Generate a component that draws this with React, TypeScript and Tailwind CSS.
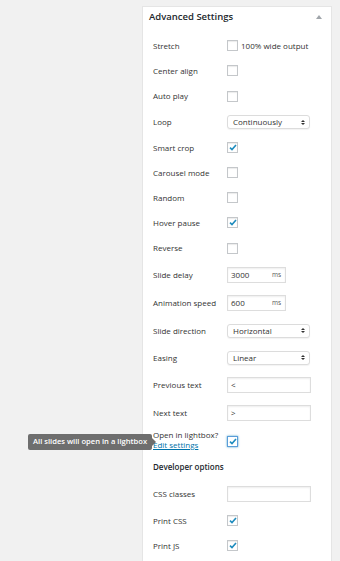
import React from "react";

type Row =
  | { kind: "check"; label: string; checked?: boolean; note?: string; h: number }
  | { kind: "select"; label: string; value: string; h: number }
  | { kind: "num"; label: string; value: string; h: number }
  | { kind: "text"; label: string; value: string; h: number }
  | { kind: "heading"; label: string; h: number }
  | { kind: "lightbox"; h: number };

const rows: Row[] = [
  { kind: "check", label: "Stretch", note: "100% wide output", h: 25 },
  { kind: "check", label: "Center align", h: 25 },
  { kind: "check", label: "Auto play", h: 26 },
  { kind: "select", label: "Loop", value: "Continuously", h: 26 },
  { kind: "check", label: "Smart crop", checked: true, h: 25 },
  { kind: "check", label: "Carousel mode", h: 25 },
  { kind: "check", label: "Random", h: 25 },
  { kind: "check", label: "Hover pause", checked: true, h: 25 },
  { kind: "check", label: "Reverse", h: 26 },
  { kind: "num", label: "Slide delay", value: "3000", h: 28 },
  { kind: "num", label: "Animation speed", value: "600", h: 28 },
  { kind: "select", label: "Slide direction", value: "Horizontal", h: 27 },
  { kind: "select", label: "Easing", value: "Linear", h: 27 },
  { kind: "text", label: "Previous text", value: "<", h: 28 },
  { kind: "text", label: "Next text", value: ">", h: 28 },
  { kind: "lightbox", h: 26 },
  { kind: "heading", label: "Developer options", h: 27 },
  { kind: "text", label: "CSS classes", value: "", h: 28 },
  { kind: "check", label: "Print CSS", checked: true, h: 25 },
  { kind: "check", label: "Print JS", checked: true, h: 25 },
];

const Checkbox = ({ checked, focus }: { checked?: boolean; focus?: boolean }) => (
  <span
    className={
      "w-[11px] h-[11px] bg-white flex items-center justify-center " +
      (focus
        ? "border border-[#5b9dd9] shadow-[0_0_2px_rgba(30,140,190,0.8)]"
        : "border border-[#c4c7ca] shadow-[inset_0_1px_1px_rgba(0,0,0,0.08)]")
    }
  >
    {checked && (
      <svg width="8" height="7" viewBox="0 0 8 7">
        <path d="M1 3.6 L3 5.6 L7 1" fill="none" stroke="#1e8cbe" strokeWidth="1.6" />
      </svg>
    )}
  </span>
);

const Select = ({ value }: { value: string }) => (
  <div className="w-[83px] h-[14px] rounded-[3px] border border-[#dcdcdc] bg-white shadow-[0_1px_1px_rgba(0,0,0,0.05)] flex items-center justify-between pl-[5px] pr-[4px]">
    <span className="text-[8px] text-[#333]">{value}</span>
    <span className="flex flex-col gap-[1px]">
      <span className="w-0 h-0 border-x-[2px] border-x-transparent border-b-[2.5px] border-b-[#333]" />
      <span className="w-0 h-0 border-x-[2px] border-x-transparent border-t-[2.5px] border-t-[#333]" />
    </span>
  </div>
);

const Input = ({ value, wide, unit }: { value: string; wide?: boolean; unit?: string }) => (
  <div
    className={
      "h-[16px] border border-[#dddddd] bg-white shadow-[inset_0_1px_2px_rgba(0,0,0,0.07)] flex items-center justify-between pl-[3px] pr-[4px] " +
      (wide ? "w-[84px]" : "w-[59px]")
    }
  >
    <span className="text-[8px] text-[#333]">{value}</span>
    {unit && <span className="text-[6.5px] text-[#555]">{unit}</span>}
  </div>
);

export default function App() {
  return (
    <div
      className="min-h-[561px] bg-[#f1f1f1] pt-[6px] pl-[142px] overflow-hidden"
      style={{ fontFamily: '"Open Sans", "Liberation Sans", sans-serif' }}
    >
      <div className="w-[190px] bg-white border border-[#e5e5e5] pb-[12px]">
        {/* header */}
        <div className="h-[20px] flex items-center justify-between pl-[6px] pr-[9px]">
          <h3 className="text-[9.5px] font-semibold text-[#23282d]">Advanced Settings</h3>
          <span className="w-0 h-0 border-x-[3px] border-x-transparent border-b-[4px] border-b-[#a0a5aa]" />
        </div>
        <div className="pt-[6px]">
          {rows.map((r, i) => {
            if (r.kind === "lightbox") {
              return (
                <div key={i} className="relative flex items-center pl-[10px]" style={{ height: r.h }}>
                  <div className="w-[74px] flex flex-col leading-[10px] text-[8px]">
                    <span className="text-[#333]">Open in lightbox?</span>
                    <span className="text-[#0073aa] underline">Edit settings</span>
                  </div>
                  <div className="pt-[2px]">
                    <Checkbox checked focus />
                  </div>
                  {/* tooltip */}
                  <div className="absolute left-[-115px] top-[7px] h-[16px] flex items-center">
                    <div className="h-[16px] bg-[#6e6e6e] rounded-[2px] px-[5px] flex items-center">
                      <span className="text-[7.6px] font-semibold text-white whitespace-nowrap">
                        All slides will open in a lightbox
                      </span>
                    </div>
                    <span className="w-0 h-0 border-y-[4px] border-y-transparent border-l-[4px] border-l-[#6e6e6e]" />
                  </div>
                </div>
              );
            }
            if (r.kind === "heading") {
              return (
                <div key={i} className="flex items-center pl-[10px]" style={{ height: r.h }}>
                  <span className="text-[8px] font-semibold text-[#23282d]">{r.label}</span>
                </div>
              );
            }
            return (
              <div key={i} className="flex items-center pl-[10px]" style={{ height: r.h }}>
                <span className="w-[74px] text-[8px] text-[#333]">{r.label}</span>
                {r.kind === "check" && (
                  <div className="flex items-center gap-[3px]">
                    <Checkbox checked={r.checked} />
                    {r.note && <span className="text-[8px] text-[#333]">{r.note}</span>}
                  </div>
                )}
                {r.kind === "select" && <Select value={r.value} />}
                {r.kind === "num" && <Input value={r.value} unit="ms" />}
                {r.kind === "text" && <Input value={r.value} wide />}
              </div>
            );
          })}
        </div>
      </div>
    </div>
  );
}
